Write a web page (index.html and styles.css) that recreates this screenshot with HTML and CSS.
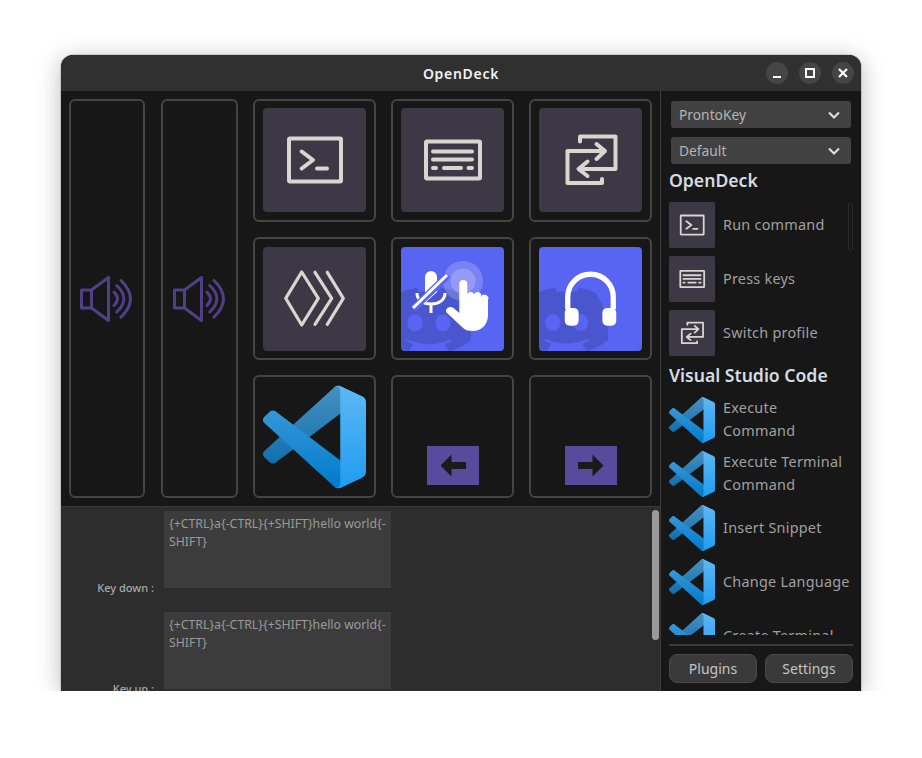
FILE: index.html
```html
<!DOCTYPE html>
<html lang="en">
<head>
    <meta charset="UTF-8">
    <meta name="viewport" content="width=device-width, initial-scale=1.0">
    <title>OpenDeck</title>
    <link rel="stylesheet" href="styles.css">
</head>
<body>

    <!-- icon sheet, reused by the deck keys and the sidebar list -->
    <svg class="icon-defs" xmlns="http://www.w3.org/2000/svg">
        <defs>
            <linearGradient id="vs-shade" x1="0" y1="0" x2="0" y2="1">
                <stop offset="0" stop-color="#fff" stop-opacity="0.28"/>
                <stop offset="1" stop-color="#fff" stop-opacity="0"/>
            </linearGradient>
            <symbol id="i-terminal" viewBox="0 0 103 104">
                <g fill="none" stroke="#d9d6d1" stroke-width="4" stroke-linecap="round" stroke-linejoin="round">
                    <rect x="26" y="30.5" width="52" height="43" rx="1"/>
                    <path d="M38.7 43.5 50 52 38.7 60.500M54 60.500H64"/>
                </g>
            </symbol>
            <symbol id="i-keys" viewBox="0 0 103 104">
                <g fill="none" stroke="#d9d6d1" stroke-width="4" stroke-linecap="round" stroke-linejoin="round">
                    <rect x="25" y="33.500" width="54" height="37" rx="1"/>
                    <path d="M32 43.500H71M32 51.500H71M32 60H35M43 60H60M67.500 60H71"/>
                </g>
            </symbol>
            <symbol id="i-switch" viewBox="0 0 103 104">
                <g fill="none" stroke="#d9d6d1" stroke-width="4" stroke-linecap="round" stroke-linejoin="round">
                    <path d="M41 33.500V28.500H76.500V61H40M48.500 53.500 39.500 61 48.500 68"/>
                    <path d="M65 43H28.500V75H63V71M57.500 36 66 43 57.500 51"/>
                </g>
            </symbol>
            <symbol id="i-vscode" viewBox="0 0 100 100">
                <path fill="#0065a9" d="M96.46 10.8 75.86.88C73.47-.27 70.62.21 68.75 2.08L1.3 63.58c-1.82 1.66-1.81 4.51 0 6.17l5.51 5.01c1.49 1.35 3.72 1.45 5.32.24L93.36 13.37C96.09 11.3 100 13.25 100 16.67v-.24c0-2.4-1.38-4.59-3.54-5.63Z"/>
                <path fill="#007acc" d="M96.46 89.2 75.86 99.12c-2.39 1.15-5.24.67-7.11-1.2L1.3 36.42c-1.82-1.66-1.81-4.51 0-6.17l5.51-5.01c1.49-1.35 3.72-1.45 5.32-.24L93.36 86.63c2.73 2.07 6.64.12 6.64-3.3v.24c0 2.4-1.38 4.59-3.54 5.63Z"/>
                <path fill="#1f9cf0" d="M75.86 99.13c-2.39 1.14-5.24.66-7.11-1.21 2.31 2.3 6.25.67 6.25-2.59V4.67c0-3.26-3.94-4.89-6.25-2.59 1.87-1.87 4.72-2.35 7.11-1.21l20.6 9.91c2.16 1.04 3.54 3.23 3.54 5.63v67.18c0 2.4-1.38 4.59-3.54 5.63Z"/>
                <path fill="url(#vs-shade)" fill-rule="evenodd" d="M70.91 99.32c1.58.61 3.37.57 4.96-.19l20.59-9.91c2.16-1.04 3.54-3.23 3.54-5.63V16.41c0-2.4-1.38-4.59-3.54-5.63L75.87.87C73.79-.13 71.34.12 69.51 1.45c-.26.19-.51.4-.74.63L29.36 38.04 12.19 25.01c-1.6-1.21-3.84-1.11-5.32.24L1.36 30.25c-1.81 1.65-1.82 4.51 0 6.17L16.25 50 1.36 63.58c-1.82 1.66-1.81 4.52 0 6.17l5.51 5c1.48 1.35 3.72 1.45 5.32.24l17.17-13.03 39.41 35.96c.62.62 1.36 1.09 2.14 1.4ZM75.02 27.3 45.11 50l29.91 22.7V27.3Z"/>
            </symbol>
            <symbol id="i-speaker" viewBox="0 0 54 46">
                <g fill="none" stroke="#514088" stroke-width="3" stroke-linecap="round" stroke-linejoin="round">
                    <path d="M11.500 14H1.500V32H11.500ZM11.500 14 28.500 1.500V44.500L11.500 32"/>
                    <path d="M34 16.200Q41 22.800 34 29.500M36.700 9.500Q51 22.800 36.700 36M41 4.500Q60 22.800 41 41.200"/>
                </g>
            </symbol>
            <symbol id="i-discord" viewBox="0 0 24 24">
                <path d="M20.317 4.3698a19.7913 19.7913 0 00-4.8851-1.5152.0741.0741 0 00-.0785.0371c-.211.3753-.4447.8648-.6083 1.2495-1.8447-.2762-3.68-.2762-5.4868 0-.1636-.3933-.4058-.8742-.6177-1.2495a.077.077 0 00-.0785-.037 19.7363 19.7363 0 00-4.8852 1.515.0699.0699 0 00-.0321.0277C.5334 9.0458-.319 13.5799.0992 18.0578a.0824.0824 0 00.0312.0561c2.0528 1.5076 4.0413 2.4228 5.9929 3.0294a.0777.0777 0 00.0842-.0276c.4616-.6304.8731-1.2952 1.226-1.9942a.076.076 0 00-.0416-.1057c-.6528-.2476-1.2743-.5495-1.8722-.8923a.077.077 0 01-.0076-.1277c.1258-.0943.2517-.1923.3718-.2914a.0743.0743 0 01.0776-.0105c3.9278 1.7933 8.18 1.7933 12.0614 0a.0739.0739 0 01.0785.0095c.1202.099.246.1981.3728.2924a.077.077 0 01-.0066.1276 12.2986 12.2986 0 01-1.873.8914.0766.0766 0 00-.0407.1067c.3604.698.7719 1.3628 1.225 1.9932a.076.076 0 00.0842.0286c1.961-.6067 3.9495-1.5219 6.0023-3.0294a.077.077 0 00.0313-.0552c.5004-5.177-.8382-9.6739-3.5485-13.6604a.061.061 0 00-.0312-.0286zM8.02 15.3312c-1.1825 0-2.1569-1.0857-2.1569-2.419 0-1.3332.9555-2.4189 2.157-2.4189 1.2108 0 2.1757 1.0952 2.1568 2.419 0 1.3332-.9555 2.4189-2.1569 2.4189zm7.9748 0c-1.1825 0-2.1569-1.0857-2.1569-2.419 0-1.3332.9554-2.4189 2.1569-2.4189 1.2108 0 2.1757 1.0952 2.1568 2.419 0 1.3332-.946 2.4189-2.1568 2.4189Z"/>
            </symbol>
        </defs>
    </svg>

    <div class="window">
        <header class="titlebar">
            <span class="title">OpenDeck</span>
            <div class="window-buttons">
                <button class="win-btn"><svg width="22" height="22" viewBox="0 0 22 22"><path d="M7 15H15" stroke="#fff" stroke-width="2"/></svg></button>
                <button class="win-btn"><svg width="22" height="22" viewBox="0 0 22 22"><rect x="7" y="7" width="8" height="8" fill="none" stroke="#fff" stroke-width="2"/></svg></button>
                <button class="win-btn"><svg width="22" height="22" viewBox="0 0 22 22"><path d="M7 7 15 15M15 7 7 15" stroke="#fff" stroke-width="2.2"/></svg></button>
            </div>
        </header>

        <div class="body">
            <main class="main">
                <section class="deck">
                    <div class="sliders">
                        <div class="slider"><svg class="speaker"><use href="#i-speaker"/></svg></div>
                        <div class="slider slider-wide"><svg class="speaker"><use href="#i-speaker"/></svg></div>
                    </div>
                    <div class="keys">
                        <div class="key"><div class="key-img tile"><svg><use href="#i-terminal"/></svg></div></div>
                        <div class="key"><div class="key-img tile"><svg><use href="#i-keys"/></svg></div></div>
                        <div class="key"><div class="key-img tile"><svg><use href="#i-switch"/></svg></div></div>
                        <div class="key"><div class="key-img tile">
                            <svg viewBox="0 0 103 104">
                                <g fill="none" stroke="#d9d6d1" stroke-width="3.200" stroke-linecap="round" stroke-linejoin="round">
                                    <path d="M38.700 25 55.300 51.300 38.700 78 22.700 51.300Z"/>
                                    <path d="M52 25.300 68.700 51.300 52 77.300M64.300 25.300 80.300 51.300 64.300 77.300"/>
                                </g>
                            </svg>
                        </div></div>
                        <div class="key"><div class="key-img discord">
                            <svg viewBox="0 0 103 104">
                                <svg class="mascot" x="-14" y="30.500" width="84" height="84"><use href="#i-discord"/></svg>
                                <circle class="ripple" cx="62" cy="34" r="20"/>
                                <circle class="ripple" cx="62" cy="34" r="12.500"/>
                                <path fill="#fff" d="M24 30a6 6 0 0 1 12 0v15l-12 11Z"/>
                                <path fill="none" stroke="#fff" stroke-width="3" d="M16 46c0 7 6 11 14 11s14-4 14-11M30 57v9"/>
                                <path stroke="#5865f2" stroke-width="7" d="M12 62 47 28"/>
                                <path stroke="#fff" stroke-width="3" d="M12 61 46 28"/>
                                <path fill="#fff" d="M58.300 37a4 4 0 0 1 8 0V48a3.400 3.400 0 0 1 6.700-.5 3.400 3.400 0 0 1 7 2.500 3.500 3.500 0 0 1 7 3V68c0 9-6 16-15 16-5 0-8-1-11-4L46 66c-1.500-1.500-1.500-3 0-4.500 2-2 4.500-2 6.500-.5l5.800 5Z"/>
                            </svg>
                        </div></div>
                        <div class="key"><div class="key-img discord">
                            <svg viewBox="0 0 104 104">
                                <svg class="mascot" x="-14" y="30.500" width="84" height="84"><use href="#i-discord"/></svg>
                                <path fill="none" stroke="#fff" stroke-width="5.400" d="M29 62V50a23 23 0 0 1 46 0V62"/>
                                <rect fill="#fff" x="26" y="61" width="14" height="18" rx="5"/>
                                <rect fill="#fff" x="64" y="61" width="14" height="18" rx="5"/>
                            </svg>
                        </div></div>
                        <div class="key"><div class="key-img"><svg><use href="#i-vscode"/></svg></div></div>
                        <div class="key key-arrow">
                            <svg class="arrow" viewBox="0 0 52 39"><rect width="52" height="39" fill="#584a9c"/><path fill="#1a1a1a" d="M13.500 19.500 24.500 8.500V16H39V23H24.500V30.500Z"/></svg>
                        </div>
                        <div class="key key-arrow">
                            <svg class="arrow" viewBox="0 0 52 39"><rect width="52" height="39" fill="#584a9c"/><path fill="#1a1a1a" d="M38.500 19.500 27.500 8.500V16H13V23H27.500V30.500Z"/></svg>
                        </div>
                    </div>
                </section>

                <section class="props">
                    <div class="prop-row">
                        <label class="prop-label" for="key-down">Key down :</label>
                        <textarea id="key-down" class="prop-input" readonly>{+CTRL}a{-CTRL}{+SHIFT}hello world{-SHIFT}</textarea>
                    </div>
                    <div class="prop-row">
                        <label class="prop-label" for="key-up">Key up :</label>
                        <textarea id="key-up" class="prop-input" readonly>{+CTRL}a{-CTRL}{+SHIFT}hello world{-SHIFT}</textarea>
                    </div>
                    <div class="props-scroll"></div>
                </section>
            </main>

            <aside class="sidebar">
                <div class="dropdown">ProntoKey<svg width="12" height="8" viewBox="0 0 12 8"><path d="M1 1.500 6 6.500 11 1.500" fill="none" stroke="#e2e2e2" stroke-width="2"/></svg></div>
                <div class="dropdown">Default<svg width="12" height="8" viewBox="0 0 12 8"><path d="M1 1.500 6 6.500 11 1.500" fill="none" stroke="#e2e2e2" stroke-width="2"/></svg></div>

                <div class="actions">
                    <div class="list-scroll"></div>
                    <h2>OpenDeck</h2>
                    <div class="action"><div class="action-icon"><svg><use href="#i-terminal"/></svg></div><span>Run command</span></div>
                    <div class="action"><div class="action-icon"><svg><use href="#i-keys"/></svg></div><span>Press keys</span></div>
                    <div class="action"><div class="action-icon"><svg><use href="#i-switch"/></svg></div><span>Switch profile</span></div>

                    <h2>Visual Studio Code</h2>
                    <div class="action"><svg class="action-logo"><use href="#i-vscode"/></svg><span>Execute Command</span></div>
                    <div class="action"><svg class="action-logo"><use href="#i-vscode"/></svg><span>Execute Terminal Command</span></div>
                    <div class="action"><svg class="action-logo"><use href="#i-vscode"/></svg><span>Insert Snippet</span></div>
                    <div class="action"><svg class="action-logo"><use href="#i-vscode"/></svg><span>Change Language</span></div>
                    <div class="action"><svg class="action-logo"><use href="#i-vscode"/></svg><span>Create Terminal</span></div>
                </div>

                <footer class="side-footer">
                    <button class="side-btn">Plugins</button>
                    <button class="side-btn">Settings</button>
                </footer>
            </aside>
        </div>
    </div>

</body>
</html>
```

FILE: styles.css
```css
body {
    margin: 0;
    background-color: #fff;
    font-family: "Noto Sans", "Open Sans", sans-serif;
    color: #bbb;
}
.icon-defs {
    display: block;
    width: 0;
    height: 0;
}
.window {
    width: 800px;
    height: 636px;
    margin: 55px 0 0 61px;
    border-radius: 12px 12px 0 0;
    overflow: hidden;
    background-color: #171717;
    box-shadow: 0 4px 24px rgba(0, 0, 0, 0.28), 0 0 0 1px rgba(0, 0, 0, 0.12);
}
.titlebar {
    position: relative;
    height: 36px;
    display: flex;
    align-items: center;
    justify-content: center;
    background-color: #303030;
}
.title {
    font-size: 14px;
    font-weight: 600;
    letter-spacing: 0.7px;
    color: #f2f2f2;
}
.window-buttons {
    position: absolute;
    right: 7px;
    top: 7px;
    display: flex;
    gap: 11px;
}
.win-btn {
    width: 22px;
    height: 22px;
    padding: 0;
    border: 0;
    border-radius: 50%;
    background-color: #454545;
}
.win-btn svg {
    display: block;
}
.body {
    display: flex;
    height: 600px;
}
.main {
    width: 599px;
    display: flex;
    flex-direction: column;
}
.deck {
    height: 415px;
    flex-shrink: 0;
    box-sizing: border-box;
    padding: 8px;
    display: flex;
    gap: 15px;
}
.sliders {
    display: flex;
    gap: 16px;
}
.slider {
    width: 76px;
    box-sizing: border-box;
    border: 2px solid #444;
    border-radius: 6px;
    display: flex;
    align-items: center;
    justify-content: center;
}
.slider-wide {
    width: 77px;
}
.speaker {
    width: 54px;
    height: 46px;
}
.keys {
    display: grid;
    grid-template-columns: repeat(3, 123px);
    grid-template-rows: repeat(3, 123px);
    gap: 15px;
}
.key {
    box-sizing: border-box;
    border: 2px solid #444;
    border-radius: 6px;
    display: flex;
    align-items: center;
    justify-content: center;
}
.key-img {
    width: 103px;
    height: 104px;
    border-radius: 4px;
    overflow: hidden;
}
.key:nth-child(-n+3) .key-img {
    margin-bottom: 2px;
}
.key-img svg {
    display: block;
    width: 100%;
    height: 100%;
}
.tile {
    background-color: #3d3846;
}
.discord {
    background-color: #5865f2;
}
.key-img .mascot {
    width: 84px;
    height: 84px;
    fill: #000;
    fill-opacity: 0.15;
}
.ripple {
    fill: #fff;
    fill-opacity: 0.2;
}
.key-arrow {
    align-items: flex-end;
    padding-bottom: 11px;
}
.arrow {
    width: 52px;
    height: 39px;
}
.props {
    position: relative;
    flex: 1;
    overflow: hidden;
    background-color: #2d2d2d;
    border-top: 1px solid #3b3b3b;
    padding-top: 4px;
}
.prop-row {
    display: flex;
    align-items: flex-end;
    gap: 10px;
    margin-bottom: 24px;
}
.prop-label {
    width: 93px;
    margin-bottom: -7px;
    text-align: right;
    font-size: 11px;
    font-weight: 500;
    line-height: 14px;
    color: #a8a8a8;
}
.prop-input {
    display: block;
    width: 227px;
    height: 77px;
    box-sizing: border-box;
    margin: 0;
    padding: 4px 4px 2px 5px;
    border: 0;
    resize: none;
    overflow: hidden;
    outline: none;
    background-color: #3c3c3c;
    font-family: inherit;
    font-size: 12.3px;
    line-height: 18px;
    color: #9a9a9a;
}
.props-scroll {
    position: absolute;
    right: 1px;
    top: 3px;
    width: 7px;
    height: 130px;
    border-radius: 4px;
    background-color: #9a9a9a;
}
.sidebar {
    width: 200px;
    box-sizing: border-box;
    border-left: 1px solid #3b3b3b;
    padding: 10px 7px 8px 8px;
    display: flex;
    flex-direction: column;
}
.dropdown {
    height: 27px;
    flex-shrink: 0;
    margin: 0 2px 9px;
    padding: 0 11px 0 8px;
    border-radius: 3px;
    background-color: #414141;
    display: flex;
    align-items: center;
    justify-content: space-between;
    font-size: 13.8px;
    color: #b4b4b4;
}
.action span {
    padding-bottom: 2px;
}
.actions {
    position: relative;
    flex: 1;
    min-height: 0;
    margin-top: -5px;
    padding-top: 2px;
    overflow: hidden;
    display: flex;
    flex-direction: column;
    gap: 8px;
}
.actions h2 {
    margin: 0;
    height: 24px;
    flex-shrink: 0;
    font-size: 17.6px;
    font-weight: 600;
    line-height: 21px;
    color: #d5dbe2;
}
.action + h2 {
    margin-top: 1px;
}
.action {
    display: flex;
    align-items: center;
    gap: 8px;
    height: 46px;
    flex-shrink: 0;
    font-size: 14.4px;
    line-height: 23px;
    letter-spacing: 0.25px;
    color: #a0a0a0;
}
.action-icon {
    width: 46px;
    height: 46px;
    flex-shrink: 0;
    border-radius: 2px;
    background-color: #3d3846;
}
.action-icon svg {
    display: block;
    width: 46px;
    height: 46px;
}
.action-logo {
    width: 46px;
    height: 46px;
    flex-shrink: 0;
}
.list-scroll {
    position: absolute;
    right: 0;
    top: 35px;
    width: 3px;
    height: 46px;
    border: 1px solid #2c2c2c;
    border-radius: 2px;
}
.side-footer {
    flex-shrink: 0;
    margin-top: 9px;
    padding-top: 8px;
    border-top: 2px solid #3a3a3a;
    display: flex;
    gap: 8px;
}
.side-btn {
    flex: 1;
    height: 29px;
    padding: 0;
    border: 1px solid #4a4a4a;
    border-radius: 8px;
    background-color: #3a3a3a;
    font-family: inherit;
    font-size: 14px;
    color: #c4c4c4;
}
```
